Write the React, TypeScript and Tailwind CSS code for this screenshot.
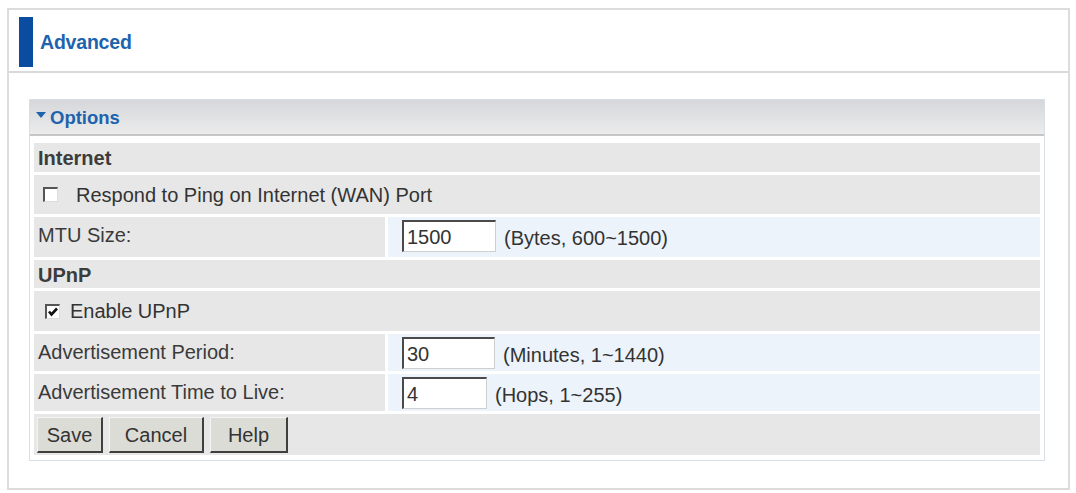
import React from 'react'

const font = { fontFamily: '"Liberation Sans", Arial, sans-serif' }

const Checkbox: React.FC<{ checked?: boolean }> = ({ checked }) => (
  <span className="relative inline-block w-[15px] h-[15px] bg-white border-t-2 border-l-2 border-r border-b border-t-[#555] border-l-[#555] border-r-[#ddd] border-b-[#ddd] shrink-0">
    {checked && (
      <svg className="absolute left-[0px] top-[0px]" width="12" height="12" viewBox="0 0 12 12">
        <path d="M2 5.5 L4.5 8.5 L10 2.5" stroke="#111" strokeWidth="2.6" fill="none" />
      </svg>
    )}
  </span>
)

const TextInput: React.FC<{ value: string; w: string }> = ({ value, w }) => (
  <div
    className={`${w} h-[32px] bg-white border-t-2 border-l-2 border-r border-b border-t-[#4a4a4a] border-l-[#4a4a4a] border-r-[#cfcfcf] border-b-[#cfcfcf] flex items-center pl-[3px] text-[20px] text-[#333] leading-none`}
  >
    {value}
  </div>
)

const Button: React.FC<{ label: string; w: string }> = ({ label, w }) => (
  <div
    className={`${w} h-[36px] bg-[#dcdcd6] border-t border-l border-r-2 border-b-2 border-t-[#f4f4f4] border-l-[#f4f4f4] border-r-[#3f3f3f] border-b-[#3f3f3f] flex items-center justify-center text-[20px] text-[#333] leading-none`}
  >
    {label}
  </div>
)

const FieldRow: React.FC<{ label: string; h: string; children: React.ReactNode }> = ({ label, h, children }) => (
  <div className={`flex gap-[3px] ${h}`}>
    <div className="w-[351px] bg-[#e7e7e7] pl-[4px] pt-[8px] text-[20px] text-[#3a3a3a] leading-none">{label}</div>
    <div className="flex-1 bg-[#edf3fb] flex items-start pt-[3px] pl-[14px] gap-[8px]">{children}</div>
  </div>
)

export default function App() {
  return (
    <div className="w-[1076px] h-[493px] bg-white pt-[8px] pl-[7px]" style={font}>
      <div className="w-[1063px] h-[482px] border-2 border-[#dcdcdc]">
        {/* header */}
        <div className="h-[63px] border-b-2 border-[#d9d9d9] flex items-start">
          <div className="ml-[10px] mt-[7px] w-[14px] h-[50px] bg-[#0a4da0]" />
          <div className="ml-[7px] mt-[23px] text-[19.5px] font-bold text-[#1d63ad] leading-none tracking-[-0.2px]">Advanced</div>
        </div>

        {/* options panel */}
        <div className="ml-[20px] mt-[26px] w-[1016px] border border-[#d7dee7]">
          <div className="h-[36px] bg-gradient-to-b from-[#d5d7da] to-[#ececec] border-b-2 border-[#c6c6c6] flex items-center pl-[6px]">
            <svg width="10" height="6" viewBox="0 0 10 6" className="mt-[-5px]">
              <path d="M0 0 L10 0 L5 6 Z" fill="#1d63ad" />
            </svg>
            <span className="ml-[4px] mt-[2px] text-[18.5px] font-bold text-[#1d63ad] leading-none">Options</span>
          </div>

          <div className="px-[4px] pt-[7px] pb-[5px] flex flex-col gap-[3px]">
            <div className="h-[29px] bg-[#e7e7e7] pl-[4px] pt-[5px] text-[20px] text-[#3c3c3c] leading-none font-bold">Internet</div>

            <div className="h-[39px] bg-[#e7e7e7] pl-[9px] flex items-center gap-[18px] text-[20px] text-[#333] leading-none">
              <Checkbox />
              <span>Respond to Ping on Internet (WAN) Port</span>
            </div>

            <FieldRow label="MTU Size:" h="h-[40px]">
              <TextInput value="1500" w="w-[94px]" />
              <span className="mt-[8px] text-[20px] text-[#333] leading-none">(Bytes, 600~1500)</span>
            </FieldRow>

            <div className="h-[28px] bg-[#e7e7e7] pl-[4px] pt-[5px] text-[20px] text-[#3c3c3c] leading-none font-bold">UPnP</div>

            <div className="h-[40px] bg-[#e7e7e7] pl-[11px] flex items-center gap-[10px] text-[20px] text-[#333] leading-none">
              <Checkbox checked />
              <span>Enable UPnP</span>
            </div>

            <FieldRow label="Advertisement Period:" h="h-[37px]">
              <TextInput value="30" w="w-[93px]" />
              <span className="mt-[8px] text-[20px] text-[#333] leading-none">(Minutes, 1~1440)</span>
            </FieldRow>

            <FieldRow label="Advertisement Time to Live:" h="h-[37px]">
              <TextInput value="4" w="w-[85px]" />
              <span className="mt-[8px] text-[20px] text-[#333] leading-none">(Hops, 1~255)</span>
            </FieldRow>

            <div className="h-[41px] bg-[#e7e7e7] pl-[3px] pt-[3px] flex items-start gap-[6px]">
              <Button label="Save" w="w-[66px]" />
              <Button label="Cancel" w="w-[95px]" />
              <Button label="Help" w="w-[78px]" />
            </div>
          </div>
        </div>
      </div>
    </div>
  )
}
